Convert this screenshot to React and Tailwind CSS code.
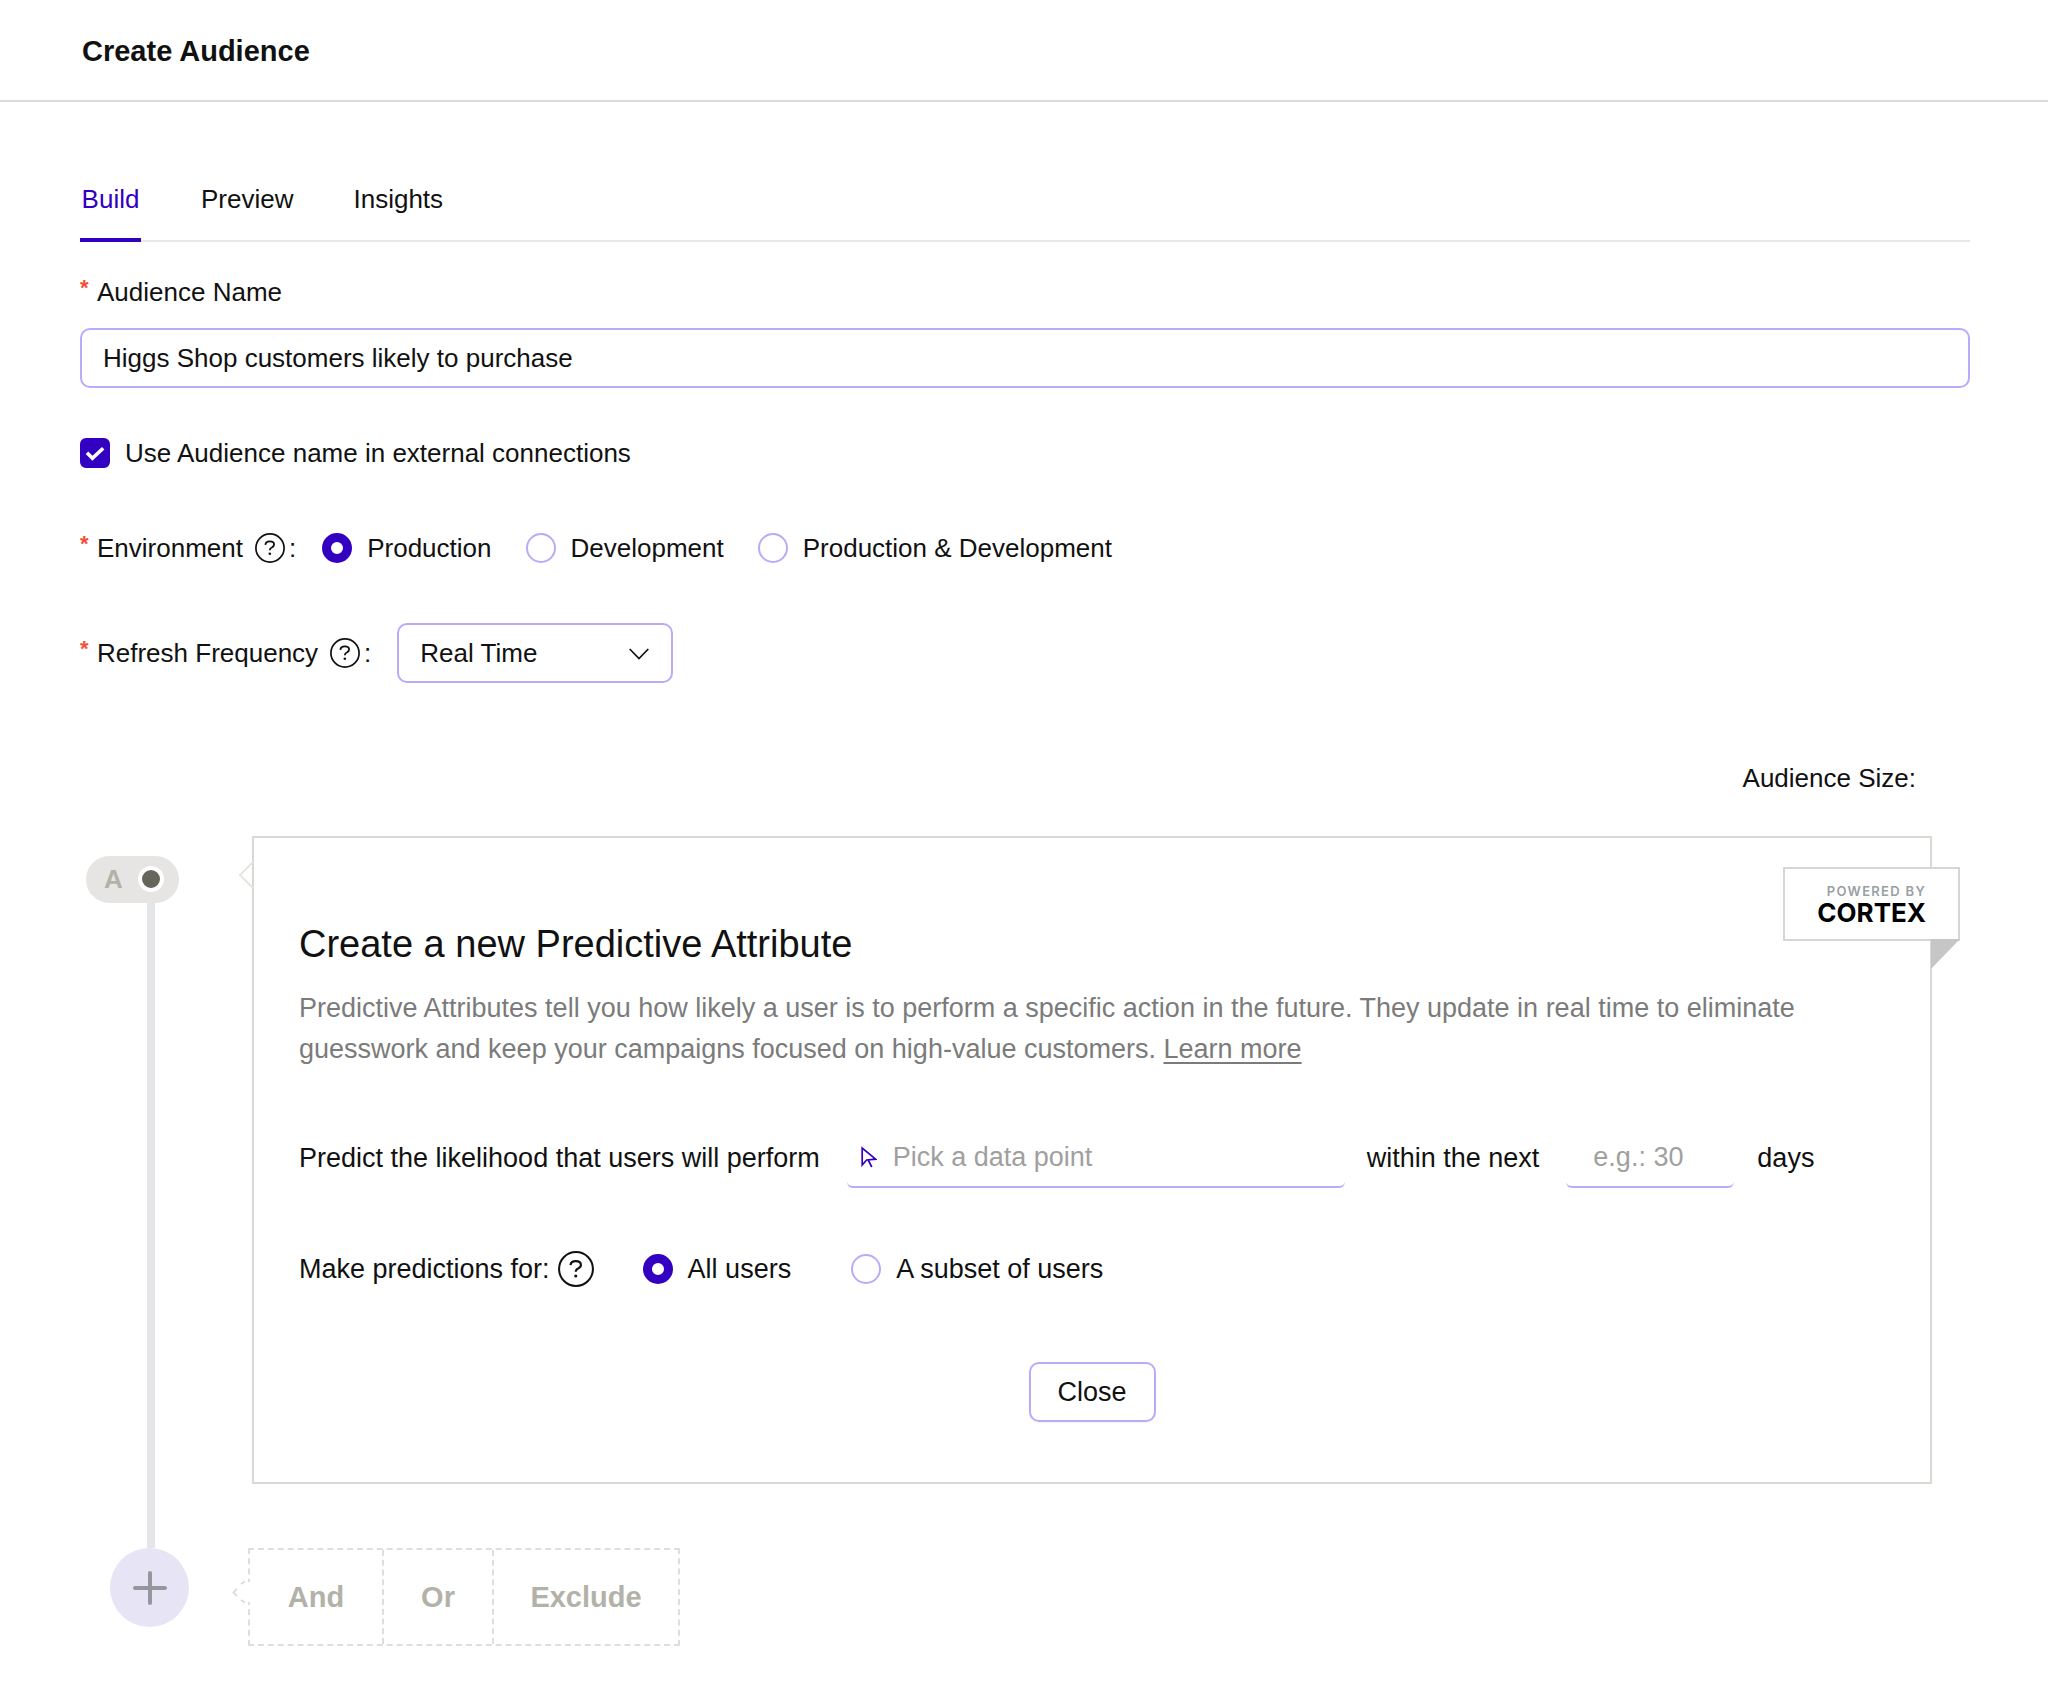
import { useState } from 'react'

function HelpIcon({ className }) {
  return (
    <svg className={className} viewBox="0 0 30 30" fill="none" stroke="#111" role="img" aria-label="Help">
      <circle cx="15" cy="15" r="14.1" strokeWidth="1.7" />
      <path d="M10.4 11.8c.2-2.2 1.9-3.4 4.4-3.4 2.6 0 4.3 1.3 4.3 3.2 0 1.6-1.1 2.3-2.3 2.9-1.3.6-2 1.2-2 2.8" strokeWidth="1.8" />
      <circle cx="14.8" cy="20.8" r="1.3" fill="#111" stroke="none" />
    </svg>
  )
}

function CursorIcon() {
  return (
    <svg className="w-4 h-6 shrink-0" viewBox="0 0 16 24" fill="none" stroke="#3300c2" strokeWidth="1.7">
      <path d="M1.2 3v17l4.4-5 9-.8z" />
      <path d="M7.2 15l3.6 7" />
    </svg>
  )
}

function Required() {
  return <span className="w-[17px] pb-2 text-[22px] leading-none font-bold text-[#f0503c]" aria-hidden="true">*</span>
}

function Radio({ name, label, checked, onChange }) {
  return (
    <label className="flex items-center gap-[15px]">
      <input
        type="radio"
        name={name}
        checked={checked}
        onChange={onChange}
        className="w-[30px] h-[30px] appearance-none rounded-full border-2 border-[#bbaaf9] bg-white checked:border-[9px] checked:border-[#3300c2]"
      />
      {label}
    </label>
  )
}

const tabs = ['Build', 'Preview', 'Insights']
const environments = ['Production', 'Development', 'Production & Development']

export default function App() {
  const [tab, setTab] = useState('Build')
  const [name, setName] = useState('Higgs Shop customers likely to purchase')
  const [external, setExternal] = useState(true)
  const [environment, setEnvironment] = useState('Production')
  const [scope, setScope] = useState('all')

  return (
    <div className="min-h-screen bg-white pb-12 font-['Liberation_Sans',sans-serif] text-[26px] leading-[40px] text-[#111]">
      <header className="h-[102px] pt-0.5 pl-[82px] flex items-center border-b-2 border-[#dadad6]">
        <h1 className="text-[29px] font-bold">Create Audience</h1>
      </header>

      <main className="pl-20 pr-[78px] pt-[60px]">
        <nav className="flex gap-[60px] border-b-2 border-[#e8e8e8]">
          {tabs.map((item) => (
            <button
              key={item}
              onClick={() => setTab(item)}
              className={
                item === tab
                  ? '-mb-0.5 h-20 min-w-[61px] pb-0.5 border-b-4 border-[#3300c2] text-[#3300c2]'
                  : '-mb-0.5 h-20 min-w-[61px] pb-0.5 border-b-4 border-transparent'
              }
            >
              {item}
            </button>
          ))}
        </nav>

        <label htmlFor="audience-name" className="mt-[30px] flex items-center">
          <Required />
          Audience Name
        </label>
        <input
          id="audience-name"
          value={name}
          onChange={(e) => setName(e.target.value)}
          className="mt-4 block w-full h-[60px] px-[21px] rounded-[10px] border-2 border-[#bbaaf9] outline-none"
        />

        <label className="mt-[45px] flex items-center gap-[15px]">
          <span className="relative flex">
            <input
              type="checkbox"
              checked={external}
              onChange={(e) => setExternal(e.target.checked)}
              className="w-[30px] h-[30px] appearance-none rounded-md border-2 border-[#bbaaf9] checked:border-[#3300c2] checked:bg-[#3300c2]"
            />
            <svg className="absolute inset-0 pointer-events-none" viewBox="0 0 30 30" fill="none" stroke="#fff" strokeWidth="3.6">
              <path d="M7 14.8l5.4 5.4L23.2 10.2" />
            </svg>
          </span>
          Use Audience name in external connections
        </label>

        <div className="mt-[55px] flex items-center" role="radiogroup" aria-label="Environment">
          <Required />
          Environment
          <HelpIcon className="ml-3 w-[30px] h-[30px]" />
          <span className="ml-1">:</span>
          <div className="ml-[26px] flex gap-[34px]">
            {environments.map((item) => (
              <Radio
                key={item}
                name="environment"
                label={item}
                checked={item === environment}
                onChange={() => setEnvironment(item)}
              />
            ))}
          </div>
        </div>

        <div className="mt-[55px] flex items-center">
          <Required />
          <label htmlFor="refresh">Refresh Frequency</label>
          <HelpIcon className="ml-3 w-[30px] h-[30px]" />
          <span className="ml-1">:</span>
          <div className="relative ml-[26px]">
            <select id="refresh" className="block w-[276px] h-[60px] pl-[21px] appearance-none rounded-[10px] border-2 border-[#bbaaf9] bg-white outline-none">
              <option>Real Time</option>
            </select>
            <svg className="absolute right-6 top-[25px] w-5 h-3 pointer-events-none" viewBox="0 0 20 12" fill="none" stroke="#111" strokeWidth="1.7">
              <path d="M.7 1l9.3 9.6L19.3 1" />
            </svg>
          </div>
        </div>

        <p className="mt-[75px] mr-[54px] text-right">Audience Size:</p>

        <div className="mt-[38px] flex">
          <div className="w-[172px] shrink-0 pt-5 flex flex-col">
            <div className="ml-1.5 w-[93px] h-[47px] pb-0.5 pl-[18px] pr-[15px] flex items-center justify-between rounded-full bg-[#e6e5e3] font-bold text-[#b2b2a9]">
              A
              <span className="w-[26px] h-[26px] rounded-full border-4 border-white bg-[#66665c]" />
            </div>
            <div className="ml-[67px] w-2 grow bg-[#e5e6e8]" />
          </div>

          <section className="relative mb-16 mr-[38px] h-[648px] grow border-2 border-[#d9d9d3] px-[45px] pt-[82px] text-[27px]">
            <svg className="absolute -left-4 top-[22px] w-4 h-[30px]" viewBox="0 0 16 30" fill="none" stroke="#e6e6e3" strokeWidth="2">
              <path d="M15 2L2 15l13 13" />
            </svg>

            <div className="absolute top-[29px] -right-[30px]">
              <div className="w-[177px] h-[74px] pt-0.5 pr-8 flex flex-col justify-center items-end border-2 border-[#d6d7d2] bg-white font-['Inter',sans-serif]">
                <span className="text-[13px] leading-4 font-semibold tracking-widest text-[#9aa0a4]">POWERED BY</span>
                <span className="text-[26px] leading-7 font-bold text-black">CORTEX</span>
              </div>
              <svg className="absolute top-[72px] right-0 w-[29px] h-[30px]" viewBox="0 0 29 30" fill="#c6c6c6">
                <path d="M0 0h29L0 30z" />
              </svg>
            </div>

            <h2 className="text-[38px] leading-[48px]">Create a new Predictive Attribute</h2>
            <p className="mt-5 leading-[41px] text-[#7b7b7b]">
              Predictive Attributes tell you how likely a user is to perform a specific action in the future. They update in real time to eliminate
              guesswork and keep your campaigns focused on high-value customers.{' '}
              <a href="#learn-more" className="underline underline-offset-4">Learn more</a>
            </p>

            <div className="mt-[58px] flex items-center">
              <label htmlFor="data-point">Predict the likelihood that users will perform</label>
              <div className="ml-[27px] w-[498px] h-[60px] pl-[14px] flex items-center gap-4 rounded-md border-b-2 border-[#bbaaf9]">
                <CursorIcon />
                <input id="data-point" placeholder="Pick a data point" className="w-full outline-none placeholder:text-[#a0a0a0]" />
              </div>
              <label htmlFor="days" className="ml-[22px]">within the next</label>
              <input
                id="days"
                placeholder="e.g.: 30"
                className="ml-[27px] mr-[23px] w-[168px] h-[60px] pl-[27px] rounded-md border-b-2 border-[#bbaaf9] outline-none placeholder:text-[#a0a0a0]"
              />
              days
            </div>

            <div className="mt-[61px] flex items-center" role="radiogroup" aria-label="Make predictions for">
              Make predictions for:
              <HelpIcon className="ml-2 w-9 h-9" />
              <div className="ml-[49px] flex gap-[60px]">
                <Radio name="scope" label="All users" checked={scope === 'all'} onChange={() => setScope('all')} />
                <Radio name="scope" label="A subset of users" checked={scope === 'subset'} onChange={() => setScope('subset')} />
              </div>
            </div>

            <div className="mt-[73px] flex justify-center">
              <button className="w-[127px] h-[60px] rounded-[10px] border-2 border-[#bbaaf9] shadow-xs">Close</button>
            </div>
          </section>
        </div>

        <div className="flex items-start">
          <button aria-label="Add condition" className="ml-[30px] w-[79px] h-[79px] flex items-center justify-center rounded-full bg-[#e7e4f5]">
            <svg className="w-[34px] h-[34px]" viewBox="0 0 34 34" stroke="#94979b" strokeWidth="4" strokeLinecap="round">
              <path d="M17 2v30M2 17h30" />
            </svg>
          </button>
          <div className="relative ml-[59px] flex border-2 border-dashed border-[#dedede] text-[29px] font-bold text-[#b2b2a9]">
            <button className="w-[132px] h-[94px]">And</button>
            <button className="w-[112px] h-[94px] border-x-2 border-dashed border-[#dedede]">Or</button>
            <button className="w-[184px] h-[94px]">Exclude</button>
            <svg className="absolute -left-[18px] top-[30px] w-5 h-6" viewBox="0 0 20 24" fill="none">
              <path d="M17 2v20" stroke="#fff" strokeWidth="4" />
              <path d="M13 1.5L9 4M5 9l-3.5 3.5L5 16M9 20l4 2.5" stroke="#dedede" strokeWidth="2" />
            </svg>
          </div>
        </div>
      </main>
    </div>
  )
}
